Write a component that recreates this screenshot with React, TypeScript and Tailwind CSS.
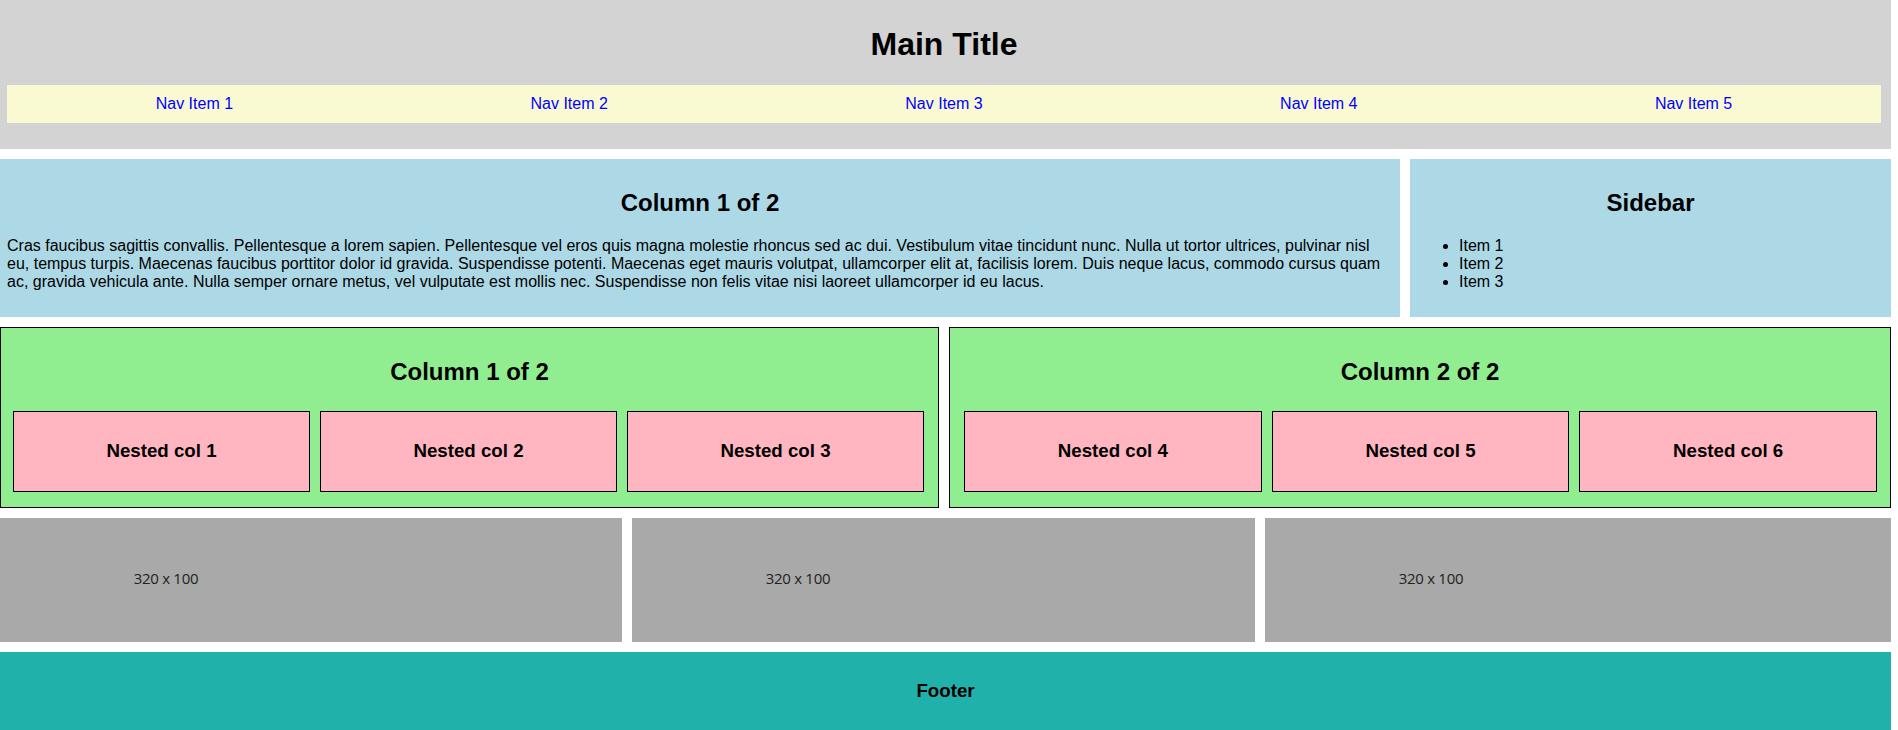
const navItems = ["Nav Item 1", "Nav Item 2", "Nav Item 3", "Nav Item 4", "Nav Item 5"];

const loremText =
  "Cras faucibus sagittis convallis. Pellentesque a lorem sapien. Pellentesque vel eros quis magna molestie rhoncus sed ac dui. Vestibulum vitae tincidunt nunc. Nulla ut tortor ultrices, pulvinar nisl eu, tempus turpis. Maecenas faucibus porttitor dolor id gravida. Suspendisse potenti. Maecenas eget mauris volutpat, ullamcorper elit at, facilisis lorem. Duis neque lacus, commodo cursus quam ac, gravida vehicula ante. Nulla semper ornare metus, vel vulputate est mollis nec. Suspendisse non felis vitae nisi laoreet ullamcorper id eu lacus.";

function NestedCol({ label }: { label: string }) {
  return (
    <div className="h-[81px] flex items-center justify-center bg-[#ffb6c1] border border-black">
      <h3 className="text-[18.72px] font-bold">{label}</h3>
    </div>
  );
}

function GreenColumn({ title, cols, inset }: { title: string; cols: string[]; inset: string }) {
  return (
    <div className="bg-[#90ee90] border border-black p-[10px]">
      <h2 className="mt-[20px] mb-[25px] h-[28px] leading-[28px] text-[24px] font-bold text-center">{title}</h2>
      <div className={`grid grid-cols-3 gap-[10px] mb-[5px] ${inset}`}>
        {cols.map((c) => (
          <NestedCol key={c} label={c} />
        ))}
      </div>
    </div>
  );
}

function Placeholder() {
  return (
    <div className="bg-[#a9a9a9] p-[10px] h-[124px]">
      <div className="w-[320px] h-[100px] flex items-center justify-center pr-[8px]">
        <span className="text-[15px] text-[#222] font-['Open_Sans',sans-serif] tracking-[-0.3px]">320 x 100</span>
      </div>
    </div>
  );
}

export default function App() {
  return (
    <div className="w-[1891px] flex flex-col gap-[10px] font-['Liberation_Sans',Arial,sans-serif] text-black text-[16px]">
      {/* header */}
      <header className="bg-[#d3d3d3] pl-[7px] pr-[10px] pt-[26px] pb-[26px]">
        <h1 className="h-[37px] leading-[37px] text-[32px] font-bold text-center mb-[22px]">Main Title</h1>
        <nav className="bg-[#fafad2] h-[38px] flex items-center">
          {navItems.map((n) => (
            <a key={n} href="#" className="flex-1 text-center text-[#0000ff] leading-[18px]">
              {n}
            </a>
          ))}
        </nav>
      </header>

      {/* content + sidebar */}
      <div className="flex gap-[10px]">
        <div className="flex-1 bg-[#add8e6] px-[7px] pt-[30px] pb-[26px]">
          <h2 className="h-[28px] leading-[28px] text-[24px] font-bold text-center mb-[20px]">Column 1 of 2</h2>
          <p className="leading-[18px]">{loremText}</p>
        </div>
        <div className="w-[481px] bg-[#add8e6] px-[7px] pt-[30px] pb-[26px]">
          <h2 className="h-[28px] leading-[28px] text-[24px] font-bold text-center mb-[20px]">Sidebar</h2>
          <ul className="list-disc pl-[42px] leading-[18px]">
            <li>Item 1</li>
            <li>Item 2</li>
            <li>Item 3</li>
          </ul>
        </div>
      </div>

      {/* nested columns */}
      <div className="grid grid-cols-[939fr_942fr] gap-[10px]">
        <GreenColumn title="Column 1 of 2" inset="ml-[2px] mr-[4px]" cols={["Nested col 1", "Nested col 2", "Nested col 3"]} />
        <GreenColumn title="Column 2 of 2" inset="ml-[4px] mr-[3px]" cols={["Nested col 4", "Nested col 5", "Nested col 6"]} />
      </div>

      {/* images */}
      <div className="grid grid-cols-[622fr_623fr_626fr] gap-[10px]">
        <Placeholder />
        <Placeholder />
        <Placeholder />
      </div>

      <footer className="bg-[#20b2aa] h-[79px] flex items-center justify-center">
        <h3 className="text-[18.72px] font-bold">Footer</h3>
      </footer>
    </div>
  );
}
